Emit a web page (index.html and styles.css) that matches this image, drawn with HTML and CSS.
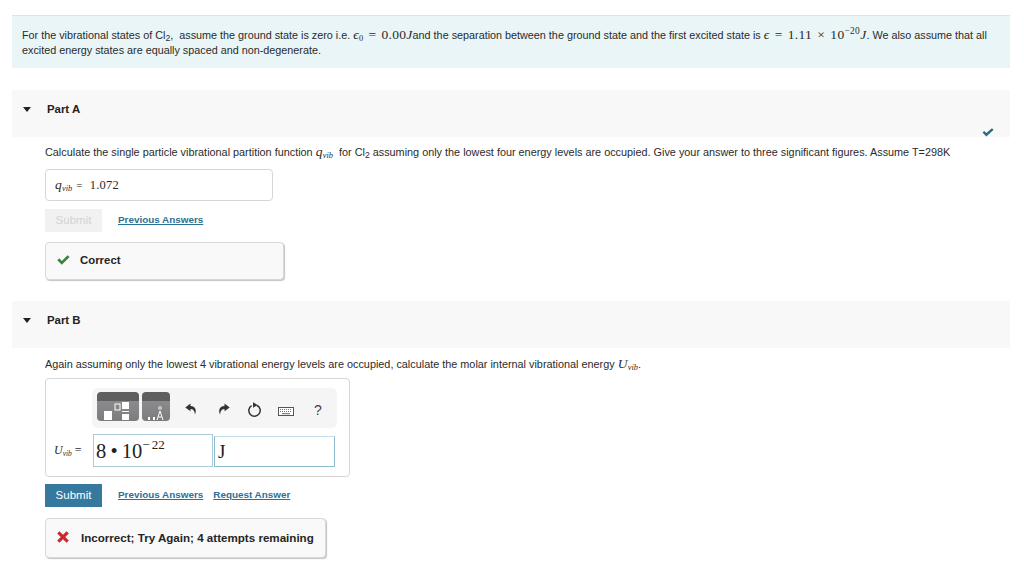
FILE: index.html
```html
<!DOCTYPE html>
<html>
<head>
  <meta charset="utf-8">
  <title>Part A and Part B</title>
  <link rel="stylesheet" href="styles.css">
</head>
<body>
  <div class="intro">
    <p>For the vibrational states of Cl<sub>2</sub>,&nbsp; assume the ground state is zero i.e. <span class="math"><i>ϵ</i><sub>0</sub> = 0.00<i>J</i></span>and the separation between the ground state and the first excited state is <span class="math"><i>ϵ</i> = 1.11 × 10<sup>−20</sup><i>J</i></span>. We also assume that all excited energy states are equally spaced and non-degenerate.</p>
  </div>

  <div class="part-head part-a">
    <span class="arrow"></span><span class="part-title">Part A</span>
  </div>
  <div class="part-body">
    <svg class="done" width="12" height="9" viewBox="0 0 12 9"><path d="M0.5 4.6 L2.2 3 L4.4 5.1 L9.9 0.2 L11.6 1.8 L4.4 8.6 Z" fill="#2d6a86"/></svg>
    <p class="prompt">Calculate the single particle vibrational partition function <span class="math"><i>q</i><sub><i>vib</i></sub></span>&nbsp; for Cl<sub>2</sub> assuming only the lowest four energy levels are occupied. Give your answer to three significant figures. Assume T=298K</p>
    <div class="answer-box"><span class="math"><i>q</i><sub><i>vib</i></sub></span><span class="math eq">=</span><span class="math value">1.072</span></div>
    <div class="actions">
      <button class="btn btn-off">Submit</button>
      <a class="link" href="#">Previous Answers</a>
    </div>
    <div class="feedback fb-correct">
      <svg width="13" height="10" viewBox="0 0 13 10"><path d="M0.3 5.2 L2.2 3.3 L4.8 5.9 L10.6 0.2 L12.6 2.1 L4.8 9.8 Z" fill="#3a8341"/></svg>
      <span>Correct</span>
    </div>
  </div>

  <div class="part-head part-b">
    <span class="arrow"></span><span class="part-title">Part B</span>
  </div>
  <div class="part-body part-body-b">
    <p class="prompt">Again assuming only the lowest 4 vibrational energy levels are occupied, calculate the molar internal vibrational energy <span class="math"><i>U</i><sub><i>vib</i></sub></span>.</p>
    <div class="editor">
      <div class="toolbar">
        <div class="tool tool-wide">
          <svg width="42" height="21" viewBox="0 0 42 21">
            <rect x="7" y="11" width="8" height="9" fill="#fff"/>
            <rect x="18" y="4" width="5" height="6" fill="none" stroke="#fff"/>
            <rect x="25" y="2" width="7" height="7" fill="#fff"/>
            <rect x="25" y="11" width="7" height="1" fill="#fff"/>
            <rect x="25" y="14" width="7" height="6" fill="#fff"/>
          </svg>
        </div>
        <div class="tool tool-small">
          <svg width="28" height="21" viewBox="0 0 28 21">
            <rect x="6" y="17" width="2" height="3" fill="#fff"/>
            <rect x="11" y="17" width="2" height="3" fill="#fff"/>
            <circle cx="18" cy="8" r="1.4" fill="none" stroke="#fff" stroke-width="0.8"/>
            <path d="M15 20 L18 11 L21 20 M16.2 17 H19.8" fill="none" stroke="#fff"/>
          </svg>
        </div>
        <svg class="icon icon-undo" width="12" height="12" viewBox="0 0 12 12"><path d="M5.5 0.5 L0.3 4.5 L5.5 8.2 V5.9 C8 5.9 9.6 7.6 10 11.5 C11.8 7.4 10.6 3.1 5.5 3 Z" fill="#333"/></svg>
        <svg class="icon icon-redo" width="12" height="12" viewBox="0 0 12 12"><path d="M6.5 0.5 L11.7 4.5 L6.5 8.2 V5.9 C4 5.9 2.4 7.6 2 11.5 C0.2 7.4 1.4 3.1 6.5 3 Z" fill="#333"/></svg>
        <svg class="icon icon-reset" width="15" height="15" viewBox="0 0 15 15"><path d="M9.6 3.2 A5.7 5.7 0 1 1 4.6 3.6" fill="none" stroke="#333" stroke-width="1.5"/><path d="M6 0.2 L10.4 3 L6 5.8 Z" fill="#333"/></svg>
        <svg class="icon icon-keys" width="16" height="9" viewBox="0 0 16 9"><rect x="0.5" y="0.5" width="15" height="8" fill="#fff" stroke="#555"/><path d="M2 2.5 H14 M2 4.5 H14" stroke="#777" stroke-dasharray="1 1"/><path d="M4 6.7 H12" stroke="#666"/></svg>
        <span class="help">?</span>
      </div>
      <div class="entry-row">
        <span class="math entry-label"><i>U</i><sub><i>vib</i></sub> =</span>
        <div class="entry entry-main">8 • 10<sup>− 22</sup></div>
        <div class="entry entry-unit">J</div>
      </div>
    </div>
    <div class="actions actions-b">
      <button class="btn">Submit</button>
      <a class="link" href="#">Previous Answers</a>
      <a class="link link-next" href="#">Request Answer</a>
    </div>
    <div class="feedback fb-wrong">
      <svg width="12" height="12" viewBox="0 0 12 12"><path d="M0.2 2.4 L2.4 0.2 L6 3.8 L9.6 0.2 L11.8 2.4 L8.2 6 L11.8 9.6 L9.6 11.8 L6 8.2 L2.4 11.8 L0.2 9.6 L3.8 6 Z" fill="#c9282d"/></svg>
      <span>Incorrect; Try Again; 4 attempts remaining</span>
    </div>
  </div>
</body>
</html>
```

FILE: styles.css
```css
html,body{
  margin: 0;
  padding: 0;
  background: #fff;
}
body{
  width: 1024px;
  height: 575px;
  overflow: hidden;
  padding-top: 15px;
  box-sizing: border-box;
  font-family: "Liberation Sans", Arial, sans-serif;
  font-size: 10.8px;
  color: #2b2b2b;
}
p{
  margin: 0;
}
sub,sup{
  line-height: 0;
  font-size: 80%;
}
sub{
  vertical-align: -2px;
}
.math{
  font-family: "Liberation Serif", "Times New Roman", serif;
  font-size: 13.5px;
  letter-spacing: .3px;
  word-spacing: 1.5px;
}
.math sub{
  font-size: 62%;
  letter-spacing: 0;
}
.math sup{
  font-size: 70%;
  vertical-align: 5px;
}
.intro{
  width: 998px;
  height: 53px;
  margin-left: 12px;
  padding: 11px 10px 0;
  box-sizing: border-box;
  background: #e9f5f7;
  border-top: 1px solid #dfe3e4;
  line-height: 15px;
}
.part-head{
  width: 998px;
  height: 47px;
  margin-left: 12px;
  padding-top: 12px;
  box-sizing: border-box;
  background: #f8f8f8;
  display: flex;
  align-items: flex-start;
}
.part-a{
  margin-top: 22px;
}
.part-b{
  margin-top: 21px;
}
.arrow{
  width: 0;
  height: 0;
  margin: 5px 16px 0 11px;
  border-left: 4.5px solid transparent;
  border-right: 4.5px solid transparent;
  border-top: 5px solid #222;
}
.part-title{
  font-weight: bold;
  font-size: 11.4px;
  line-height: 14px;
  color: #222;
}
.part-body{
  position: relative;
  padding: 8px 0 0 45px;
}
.part-body-b{
  padding-top: 9px;
}
.done{
  position: absolute;
  left: 982px;
  top: -9px;
}
.prompt{
  font-size: 10.85px;
  line-height: 14px;
}
.answer-box{
  width: 228px;
  height: 32px;
  margin-top: 10px;
  padding-left: 9px;
  box-sizing: border-box;
  border: 1px solid #d6d6d6;
  border-radius: 4px;
  display: flex;
  align-items: center;
}
.eq{
  margin: 0 7px 0 4px;
  font-size: 11px;
}
.value{
  font-size: 12.5px;
  letter-spacing: .2px;
}
.actions{
  display: flex;
  align-items: center;
  margin-top: 7px;
  height: 24px;
}
.actions-b{
  margin-top: 6px;
}
.btn{
  width: 57px;
  height: 23px;
  margin-right: 16px;
  padding: 0;
  border: none;
  background: #36799e;
  color: #fff;
  font-family: inherit;
  font-size: 11.5px;
}
.btn-off{
  background: #f1f1f1;
  color: #d3d3d3;
}
.link{
  margin-bottom: 2px;
  color: #2b7196;
  font-size: 9.9px;
  font-weight: bold;
  text-decoration: underline;
}
.link-next{
  margin-left: 10px;
}
.feedback{
  display: flex;
  align-items: center;
  margin-top: 10px;
  padding-bottom: 2px;
  box-sizing: border-box;
  background: #f9f9f9;
  border: 1px solid #d8d8d8;
  border-radius: 4px;
  box-shadow: 1px 1px 1px #c4c4c4;
  font-weight: bold;
  font-size: 11.4px;
  color: #252525;
}
.fb-correct{
  width: 239px;
  height: 38px;
  padding-left: 11px;
  gap: 10px;
}
.fb-wrong{
  width: 281px;
  height: 40px;
  margin-top: 11px;
  padding-left: 11px;
  gap: 12px;
  font-size: 11.6px;
}
.editor{
  width: 305px;
  height: 99px;
  margin-top: 7px;
  padding: 9px 0 0 46px;
  box-sizing: border-box;
  border: 1px solid #d6d6d6;
  border-radius: 4px;
}
.toolbar{
  width: 245px;
  height: 40px;
  padding: 4px 0 0 5px;
  box-sizing: border-box;
  background: #f5f5f5;
  border-radius: 5px;
  display: flex;
  align-items: flex-start;
}
.tool{
  height: 29px;
  margin-right: 3px;
  box-sizing: border-box;
  border-radius: 4px;
  background: linear-gradient(#5f5f5f 0, #5f5f5f 9px, #8b8b8d 9px, #7c7c7e 100%);
  display: flex;
  align-items: flex-end;
}
.tool-wide{
  width: 42px;
}
.tool-small{
  width: 28px;
}
.icon{
  flex: none;
}
.icon-undo{
  margin: 11px 0 0 12px;
}
.icon-redo{
  margin: 11px 0 0 21px;
}
.icon-reset{
  margin: 10px 0 0 17px;
}
.icon-keys{
  margin: 15px 0 0 16px;
}
.help{
  margin: 10px 0 0 20px;
  font-size: 14px;
  line-height: 16px;
  color: #444;
}
.entry-row{
  display: flex;
  align-items: flex-end;
  margin: 6px 0 0 -38px;
}
.entry-label{
  font-size: 12px;
  letter-spacing: 0;
  word-spacing: 0;
  width: 39px;
  align-self: center;
  flex: none;
}
.entry{
  box-sizing: border-box;
  border: 1px solid #9fc5d6;
  font-family: "Liberation Serif", "Times New Roman", serif;
  color: #222;
}
.entry-main{
  width: 120px;
  height: 33px;
  padding-left: 2px;
  font-size: 20.5px;
  line-height: 32px;
  word-spacing: -1px;
  border-color: #a9cbda;
}
.entry-main sup{
  font-size: 13px;
  vertical-align: 9px;
}
.entry-unit{
  width: 121px;
  height: 31px;
  margin-left: 1px;
  padding-left: 3px;
  font-size: 19px;
  line-height: 29px;
  border-color: #c5dde6 #8fbbd0 #8fbbd0 #8fbbd0;
}
```
